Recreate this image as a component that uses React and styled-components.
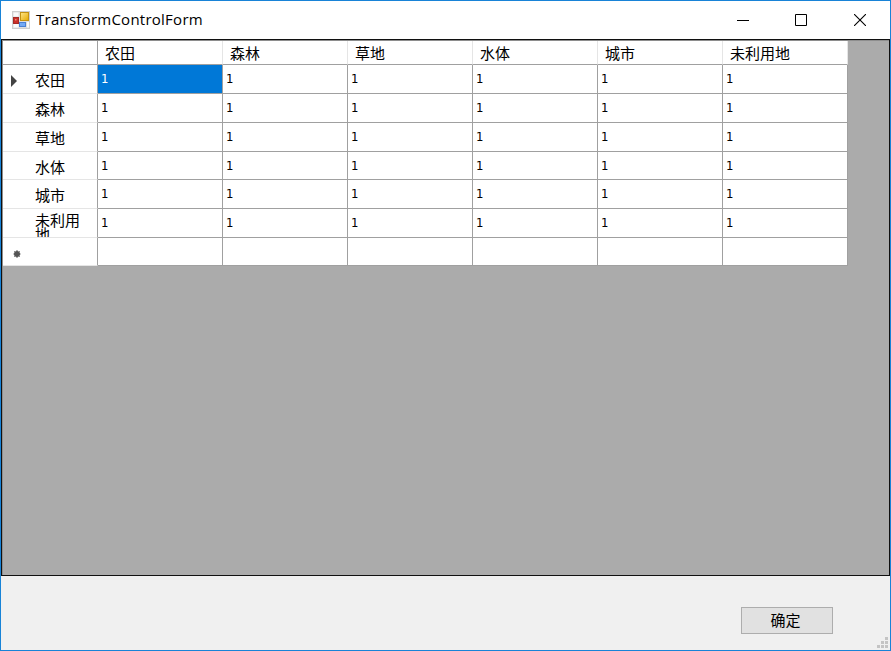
import React from 'react';
import styled, { createGlobalStyle } from 'styled-components';

const GlobalStyle = createGlobalStyle`
  *, *::before, *::after { box-sizing: border-box; }
  body { margin: 0; overflow: hidden; }
`;

const Window = styled.div`
  width: 891px;
  height: 651px;
  display: flex;
  flex-direction: column;
  border: 1px solid #1883d7;
  background: #f0f0f0;
  color: #000;
  font-family: "Noto Sans CJK SC", sans-serif;
`;

const TitleBar = styled.header`
  height: 38px;
  flex: none;
  display: flex;
  align-items: center;
  padding-left: 11px;
  background: #fff;
`;

const Title = styled.h1`
  flex: 1;
  margin: 0 0 0 6px;
  font: 400 15px/38px "Open Sans", "Noto Sans", sans-serif;
  letter-spacing: 0.25px;
  padding-bottom: 2px;
`;

const Controls = styled.div`
  display: flex;
`;

const ControlButton = styled.button`
  width: ${(p) => p.$width || 58}px;
  height: 38px;
  padding: 0;
  border: 0;
  background: none;
  display: grid;
  place-items: center;
`;

const GridPanel = styled.main`
  height: 537px;
  flex: none;
  border: 1px solid #101010;
  background: #ababab;
  box-shadow: inset 1px 1px 0 #8e8e8e;
  padding: 1px 0 0 1px;
`;

const Table = styled.div`
  width: 845px;
  display: grid;
  grid-template-columns: 95px repeat(6, 125px);
  grid-template-rows: 24px 29px 29px 29px 28px 29px 29px 28px;
`;

const Corner = styled.div`
  background: #fff;
  border-right: 1px solid #a0a0a0;
  border-bottom: 1px solid #a0a0a0;
`;

const ColumnHeader = styled.div`
  background: #fff;
  border-right: 1px solid #e5e5e5;
  border-bottom: 1px solid #a0a0a0;
  padding-left: 7px;
  font-size: 15px;
  line-height: 23px;
`;

const RowHeader = styled.div`
  display: flex;
  overflow: hidden;
  background: #fff;
  border-right: 1px solid #a0a0a0;
  border-bottom: 1px solid #e5e5e5;
`;

const Marker = styled.span`
  width: 32px;
  flex: none;
  padding-left: 7px;
  svg { display: block; }
`;

const RowLabel = styled.span`
  width: 48px;
  font-size: 15px;
  line-height: ${(p) => (p.$wrapped ? 14 : 29)}px;
  padding-top: ${(p) => (p.$wrapped ? 4 : 0)}px;
`;

const Cell = styled.div`
  border-right: 1px solid #a0a0a0;
  border-bottom: 1px solid #a0a0a0;
  padding-left: 3px;
  background: ${(p) => (p.$selected ? '#0078d7' : '#fff')};
  color: ${(p) => (p.$selected ? '#fff' : '#000')};
  font: 13px/28px "DejaVu Sans Condensed", "DejaVu Sans", sans-serif;
`;

const Footer = styled.footer`
  flex: 1;
  display: flex;
  justify-content: flex-end;
  align-items: flex-start;
  padding-top: 31px;
`;

const ConfirmButton = styled.button`
  width: 92px;
  height: 27px;
  margin-right: 44px;
  padding: 0 3px 1px 0;
  border: 1px solid #adadad;
  background: #e1e1e1;
  color: #000;
  font: 15px/24px "Noto Sans CJK SC", sans-serif;
`;

const SizeGrip = styled.svg`
  align-self: flex-end;
  flex: none;
  margin: 0 2px 2px 0;
`;

function FormIcon() {
  return (
    <svg width="18" height="18" viewBox="0 0 18 18">
      <defs>
        <linearGradient id="gold" x1="0" y1="0" x2="1" y2="1">
          <stop offset="0" stopColor="#ffe68a" />
          <stop offset="1" stopColor="#e5a900" />
        </linearGradient>
      </defs>
      <rect x="0.5" y="0.5" width="17" height="17" fill="#dedede" stroke="#cfcfcf" />
      <rect x="1.5" y="1.5" width="5" height="4" fill="#fafafa" />
      <rect x="1.5" y="13" width="5" height="3.5" fill="#fafafa" />
      <rect x="1.5" y="6.5" width="5" height="6" fill="#cb3029" stroke="#a52a25" />
      <rect x="3" y="8" width="1.5" height="1.5" fill="#ed8b7c" />
      <rect x="8.5" y="1.5" width="8" height="8" fill="url(#gold)" stroke="#c49212" />
      <rect x="7.5" y="11.5" width="6" height="4" fill="#74aaf5" stroke="#4a80d4" />
      <rect x="15" y="11" width="2" height="5.5" fill="#fafafa" />
    </svg>
  );
}

function RowMarker({ kind }) {
  return (
    <svg width="16" height="29" viewBox="0 0 16 29">
      {kind === 'current' && <path d="M1 10v12l6-6z" fill="#444" />}
      {kind === 'new' && (
        <>
          <circle cx="7" cy="16" r="3" fill="#555" />
          <path d="M7 12v8M3.4 16h7.2M4.3 13.3l5.4 5.4M9.7 13.3l-5.4 5.4" stroke="#555" strokeWidth="0.9" />
        </>
      )}
    </svg>
  );
}

const landTypes = ['农田', '森林', '草地', '水体', '城市', '未利用地'];
const gripDots = [[8, 0], [4, 4], [8, 4], [0, 8], [4, 8], [8, 8]];

export default function App() {
  return (
    <>
      <GlobalStyle />
      <Window>
        <TitleBar>
          <FormIcon />
          <Title>TransformControlForm</Title>
          <Controls>
            <ControlButton aria-label="Minimize">
              <svg width="12" height="12"><path d="M0 6.5h12" stroke="#000" /></svg>
            </ControlButton>
            <ControlButton aria-label="Maximize">
              <svg width="12" height="12"><path d="M.5.5h11v11H.5z" fill="none" stroke="#000" /></svg>
            </ControlButton>
            <ControlButton aria-label="Close" $width={60}>
              <svg width="12" height="12"><path d="M0 0l12 12M12 0L0 12" stroke="#000" strokeWidth="1.1" /></svg>
            </ControlButton>
          </Controls>
        </TitleBar>
        <GridPanel>
          <Table>
            <Corner />
            {landTypes.map((name) => <ColumnHeader key={name}>{name}</ColumnHeader>)}
            {landTypes.map((name, row) => (
              <React.Fragment key={name}>
                <RowHeader>
                  <Marker><RowMarker kind={row === 0 ? 'current' : ''} /></Marker>
                  <RowLabel $wrapped={name.length > 3}>{name}</RowLabel>
                </RowHeader>
                {landTypes.map((target, col) => (
                  <Cell key={target} $selected={row === 0 && col === 0}>1</Cell>
                ))}
              </React.Fragment>
            ))}
            <RowHeader>
              <Marker><RowMarker kind="new" /></Marker>
            </RowHeader>
            {landTypes.map((name) => <Cell key={name} />)}
          </Table>
        </GridPanel>
        <Footer>
          <ConfirmButton>确定</ConfirmButton>
          <SizeGrip width="11" height="11">
            {gripDots.map(([x, y]) => (
              <rect key={`${x}-${y}`} x={x} y={y} width="3" height="3" fill="#c4c4c4" />
            ))}
          </SizeGrip>
        </Footer>
      </Window>
    </>
  );
}
